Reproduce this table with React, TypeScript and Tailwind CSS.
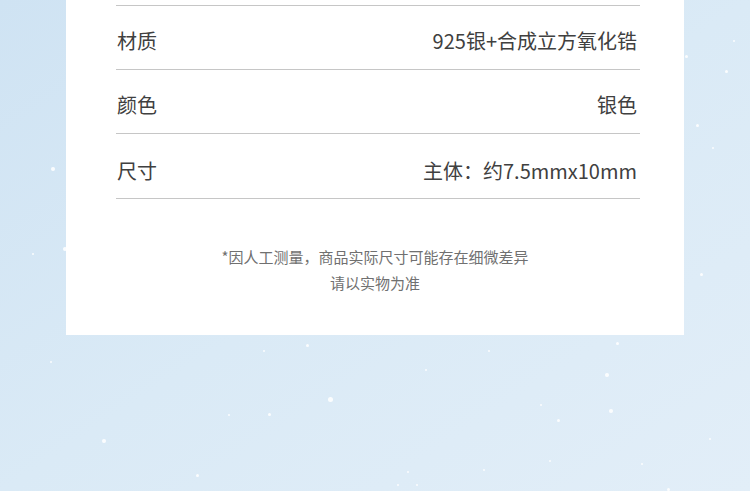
const rows = [
  { label: '材质', value: '925银+合成立方氧化锆', h: 'h-[64px]' },
  { label: '颜色', value: '银色', h: 'h-[64px]' },
  { label: '尺寸', value: '主体：约7.5mmx10mm', h: 'h-[65px] pt-[9px]' },
];

// sparkle dots on the snowy background: [x, y, size]
const dots: [number, number, number][] = [
  [51, 167, 4], [63, 247, 4], [32, 253, 2], [50, 361, 2],
  [725, 70, 3], [696, 124, 3], [712, 147, 2], [700, 273, 3], [685, 55, 3], [733, 40, 2],
  [306, 344, 3], [263, 350, 2], [488, 350, 2], [616, 342, 3], [605, 373, 4],
  [328, 397, 5], [609, 409, 4], [540, 404, 2], [557, 419, 3], [268, 413, 3],
  [228, 414, 2], [102, 439, 4], [196, 474, 3], [549, 460, 2], [641, 463, 2],
  [407, 471, 2], [483, 469, 2], [667, 488, 3], [709, 438, 2], [416, 484, 2],
  [397, 484, 2], [425, 369, 2],
];

export default function App() {
  return (
    <div
      className="relative w-[750px] h-[491px] overflow-hidden bg-gradient-to-br from-[#cfe3f3] via-[#daeaf6] to-[#e2eef8]"
      style={{ fontFamily: '"Noto Sans CJK SC", "Noto Sans", sans-serif' }}
    >
      {dots.map(([x, y, s], i) => (
        <div
          key={i}
          className="absolute rounded-full bg-white opacity-90 blur-[0.5px]"
          style={{ left: x, top: y, width: s, height: s }}
        />
      ))}

      <div className="relative ml-[66px] w-[618px] bg-white px-[50px] pt-[5px] pb-[39px]">
        <div className="-mr-[6px] border-t border-[#c6c6c6]">
          {rows.map((r) => (
            <div
              key={r.label}
              className={`flex items-center justify-between border-b border-[#c6c6c6] pt-[7px] pl-[1px] pr-[3px] text-[20px] text-[#404040] ${r.h}`}
            >
              <span>{r.label}</span>
              <span>{r.value}</span>
            </div>
          ))}
        </div>

        <div className="mt-[45px] text-center text-[15px] leading-[26px] text-[#707070]">
          <p>*因人工测量，商品实际尺寸可能存在细微差异</p>
          <p>请以实物为准</p>
        </div>
      </div>
    </div>
  );
}
